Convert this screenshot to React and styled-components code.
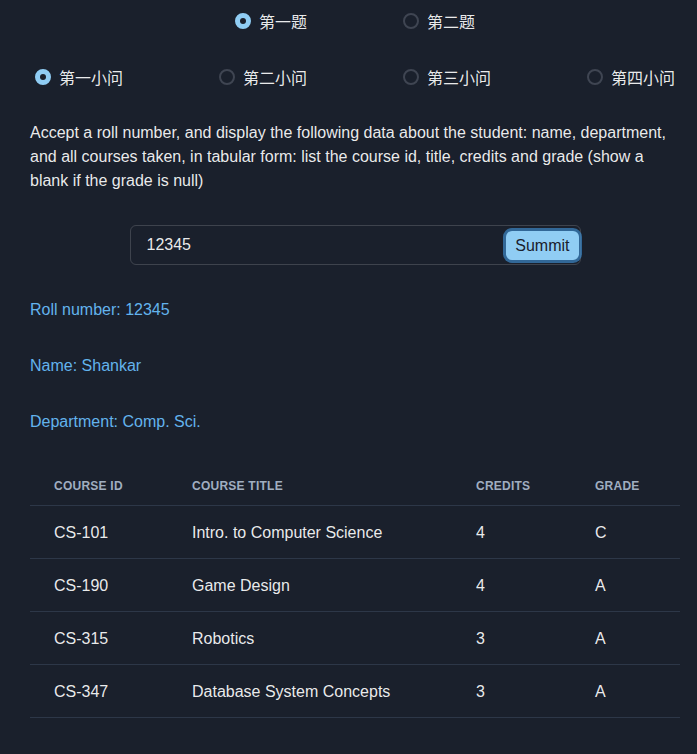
import React, { useState } from 'react';
import styled, { createGlobalStyle } from 'styled-components';

const GlobalStyle = createGlobalStyle`
  html, body {
    margin: 0;
    padding: 0;
    background: #1a202c;
  }
  body {
    font-family: "Liberation Sans", "Noto Sans CJK SC", sans-serif;
    color: rgba(255, 255, 255, 0.92);
    font-size: 16px;
    line-height: 24px;
  }
`;

const courses = [
  { id: 'CS-101', title: 'Intro. to Computer Science', credits: 4, grade: 'C' },
  { id: 'CS-190', title: 'Game Design', credits: 4, grade: 'A' },
  { id: 'CS-315', title: 'Robotics', credits: 3, grade: 'A' },
  { id: 'CS-347', title: 'Database System Concepts', credits: 3, grade: 'A' },
];

const questions = ['第一题', '第二题'];
const parts = ['第一小问', '第二小问', '第三小问', '第四小问'];

const Radio = ({ label, checked, onClick }) => (
  <RadioLabel onClick={onClick}>
    <RadioCircle checked={checked} />
    <RadioText>{label}</RadioText>
  </RadioLabel>
);

const App = () => {
  const [question, setQuestion] = useState(0);
  const [part, setPart] = useState(0);
  const [roll, setRoll] = useState('12345');

  return (
    <>
      <GlobalStyle />
      <Page>
        <QuestionRow>
          {questions.map((q, i) => (
            <Radio key={q} label={q} checked={question === i} onClick={() => setQuestion(i)} />
          ))}
        </QuestionRow>
        <PartRow>
          {parts.map((p, i) => (
            <Radio key={p} label={p} checked={part === i} onClick={() => setPart(i)} />
          ))}
        </PartRow>
        <Description>
          Accept a roll number, and display the following data about the student: name, department,
          and all courses taken, in tabular form: list the course id, title, credits and grade (show a
          blank if the grade is null)
        </Description>
        <InputGroup>
          <Input value={roll} onChange={(e) => setRoll(e.target.value)} />
          <SubmitButton>Summit</SubmitButton>
        </InputGroup>
        <Info>Roll number: 12345</Info>
        <Info>Name: Shankar</Info>
        <Info>Department: Comp. Sci.</Info>
        <Table>
          <colgroup>
            <col style={{ width: 138 }} />
            <col style={{ width: 284 }} />
            <col style={{ width: 119 }} />
            <col style={{ width: 109 }} />
          </colgroup>
          <thead>
            <tr>
              <Th>Course ID</Th>
              <Th>Course Title</Th>
              <Th>Credits</Th>
              <Th>Grade</Th>
            </tr>
          </thead>
          <tbody>
            {courses.map((c) => (
              <tr key={c.id}>
                <Td>{c.id}</Td>
                <Td>{c.title}</Td>
                <Td>{c.credits}</Td>
                <Td>{c.grade}</Td>
              </tr>
            ))}
          </tbody>
        </Table>
      </Page>
    </>
  );
};

const Page = styled.div`
  width: 650px;
  margin-left: 30px;
  padding-top: 9px;
  display: flex;
  flex-direction: column;
`;

const QuestionRow = styled.div`
  display: flex;
  justify-content: center;
  gap: 96px;
`;

const PartRow = styled.div`
  display: flex;
  justify-content: space-between;
  padding: 0 5px;
  margin-top: 32px;
`;

const RadioLabel = styled.label`
  display: flex;
  align-items: center;
  cursor: pointer;
  height: 24px;
`;

const RadioCircle = styled.span`
  box-sizing: border-box;
  width: 16px;
  height: 16px;
  border-radius: 50%;
  border: 2px solid ${(p) => (p.checked ? '#90cdf4' : '#3f4552')};
  background: ${(p) => (p.checked ? '#90cdf4' : 'transparent')};
  display: flex;
  align-items: center;
  justify-content: center;

  &::after {
    content: '';
    display: ${(p) => (p.checked ? 'block' : 'none')};
    width: 6px;
    height: 6px;
    border-radius: 50%;
    background: #1a202c;
  }
`;

const RadioText = styled.span`
  margin-left: 8px;
  font-family: "Noto Sans CJK SC", sans-serif;
  font-size: 16px;
  line-height: 24px;
`;

const Description = styled.p`
  margin: 32px 0 0;
  font-size: 16px;
  line-height: 24px;
`;

const InputGroup = styled.div`
  position: relative;
  align-self: center;
  width: 451px;
  height: 40px;
  margin-top: 32px;
`;

const Input = styled.input`
  box-sizing: border-box;
  width: 100%;
  height: 40px;
  padding: 0 90px 0 16px;
  background: transparent;
  border: 1px solid rgba(255, 255, 255, 0.16);
  border-radius: 6px;
  color: rgba(255, 255, 255, 0.92);
  font-family: "Liberation Sans", sans-serif;
  font-size: 16px;
  outline: none;
`;

const SubmitButton = styled.button`
  position: absolute;
  right: 2px;
  top: 6px;
  height: 29px;
  padding: 0 9px;
  background: #90cdf4;
  color: #1a202c;
  border: none;
  border-radius: 6px;
  box-shadow: 0 0 0 3px rgba(66, 153, 225, 0.6);
  font-family: "Liberation Sans", sans-serif;
  font-size: 16px;
  font-weight: 400;
  cursor: pointer;
`;

const Info = styled.p`
  margin: 33px 0 0;
  color: #63b3ed;
  font-size: 16px;
  line-height: 24px;

  & + & {
    margin-top: 32px;
  }
`;

const Table = styled.table`
  width: 650px;
  margin-top: 31px;
  border-collapse: collapse;
  table-layout: fixed;
`;

const Th = styled.th`
  text-align: left;
  padding: 13px 24px 11px;
  font-size: 12px;
  line-height: 16px;
  font-weight: 700;
  letter-spacing: 0.02em;
  text-transform: uppercase;
  color: #a0aec0;
  border-bottom: 1px solid #2d3748;
`;

const Td = styled.td`
  padding: 17px 24px 15px;
  font-size: 16px;
  line-height: 20px;
  border-bottom: 1px solid #2d3748;
`;

export default App;
